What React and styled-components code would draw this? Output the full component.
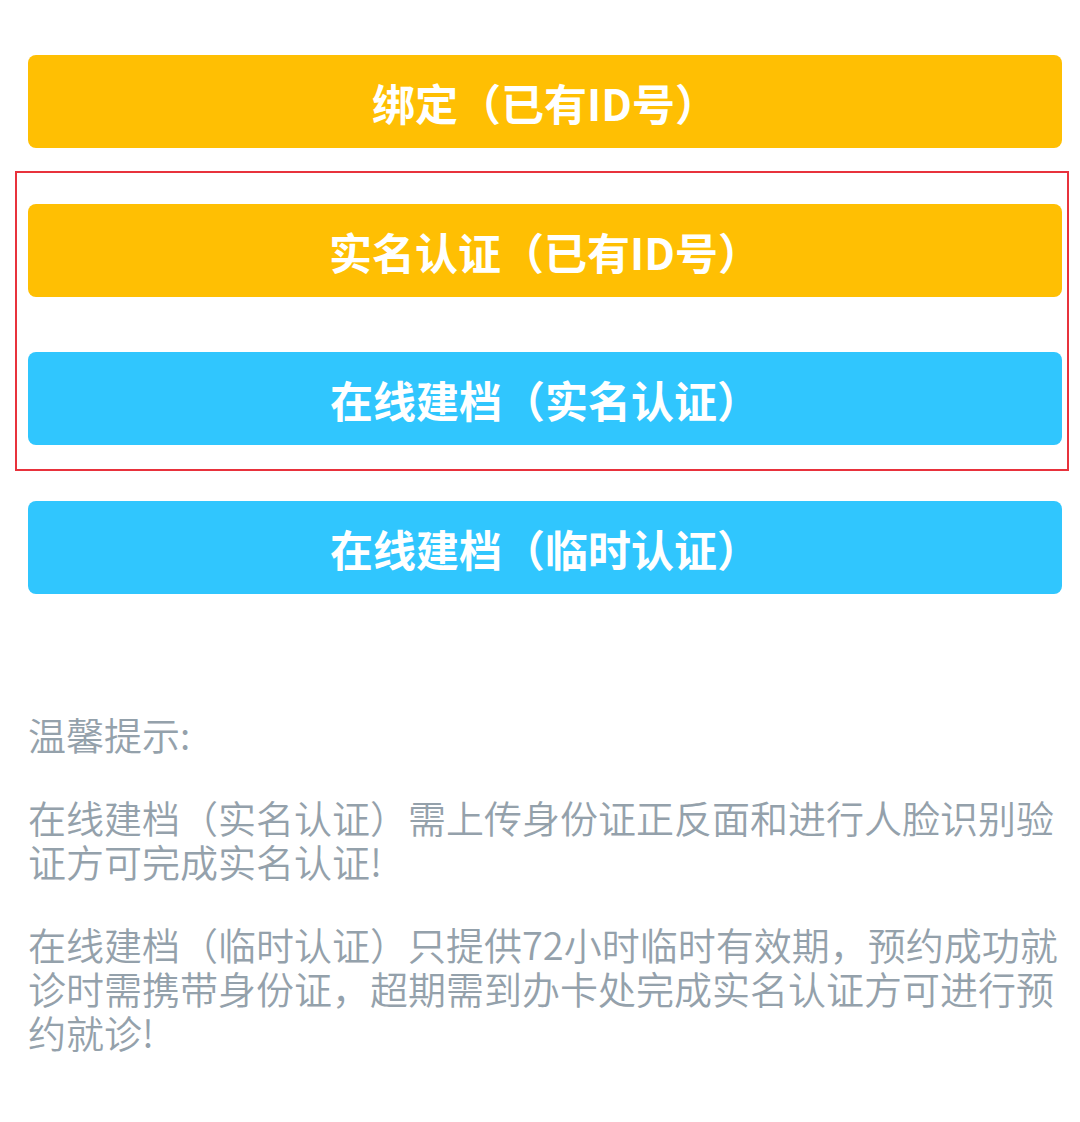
import styled, { createGlobalStyle } from 'styled-components';

const GlobalStyle = createGlobalStyle`
  html, body {
    margin: 0;
    padding: 0;
    background: #ffffff;
  }

  body {
    font-family: "Noto Sans CJK SC", "Noto Sans", sans-serif;
  }
`;

const buttons = {
  bind: { label: '绑定（已有ID号）', color: 'yellow' },
  realName: { label: '实名认证（已有ID号）', color: 'yellow' },
  onlineReal: { label: '在线建档（实名认证）', color: 'blue' },
  onlineTemp: { label: '在线建档（临时认证）', color: 'blue' },
};

const tips = [
  '在线建档（实名认证）需上传身份证正反面和进行人脸识别验证方可完成实名认证!',
  '在线建档（临时认证）只提供72小时临时有效期，预约成功就诊时需携带身份证，超期需到办卡处完成实名认证方可进行预约就诊!',
];

export default function App() {
  return (
    <>
      <GlobalStyle />
      <Page>
        <ActionButton $color={buttons.bind.color}>{buttons.bind.label}</ActionButton>

        <Highlight>
          <ActionButton $color={buttons.realName.color}>{buttons.realName.label}</ActionButton>
          <ActionButton $color={buttons.onlineReal.color}>{buttons.onlineReal.label}</ActionButton>
        </Highlight>

        <ActionButton $color={buttons.onlineTemp.color}>{buttons.onlineTemp.label}</ActionButton>

        <Tips>
          <p>温馨提示:</p>
          {tips.map((tip) => (
            <p key={tip}>{tip}</p>
          ))}
        </Tips>
      </Page>
    </>
  );
}

const Page = styled.div`
  width: 1080px;
  min-height: 1122px;
  box-sizing: border-box;
  padding: 55px 18px 0 28px;
  display: flex;
  flex-direction: column;
`;

const ActionButton = styled.button`
  width: 100%;
  height: 93px;
  border: none;
  border-radius: 8px;
  padding: 0;
  display: flex;
  align-items: center;
  justify-content: center;
  background-color: ${(props) => (props.$color === 'blue' ? '#30c6fe' : '#ffbf03')};
  color: #ffffff;
  font-family: "Noto Sans CJK SC", "Noto Sans", sans-serif;
  font-size: 43px;
  font-weight: 700;
  cursor: pointer;
`;

const Highlight = styled.div`
  margin: 23px -7px 30px -13px;
  padding: 31px 5px 24px 11px;
  border: 2px solid #e8323c;
  display: flex;
  flex-direction: column;
  gap: 55px;
`;

const Tips = styled.div`
  margin-top: 118px;
  margin-right: -10px;
  display: flex;
  flex-direction: column;
  gap: 39px;

  > p {
    margin: 0;
    font-size: 38px;
    font-weight: 350;
    line-height: 44px;
    color: #94a1ab;
  }
`;
